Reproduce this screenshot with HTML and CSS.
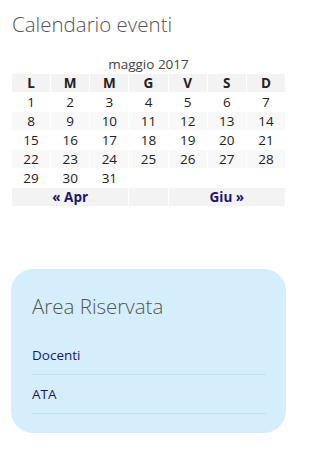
FILE: index.html
```html
<!DOCTYPE html>
<html lang="it">
<head>
    <meta charset="UTF-8">
    <meta name="viewport" content="width=device-width, initial-scale=1.0">
    <title>Calendario eventi</title>
    <link rel="stylesheet" href="styles.css">
</head>
<body>
    <div class="widget">
        <h2 class="widget-title">Calendario eventi</h2>
        <table class="calendar">
            <caption>maggio 2017</caption>
            <thead>
                <tr>
                    <th>L</th><th>M</th><th>M</th><th>G</th><th>V</th><th>S</th><th>D</th>
                </tr>
            </thead>
            <tbody>
                <tr><td>1</td><td>2</td><td>3</td><td>4</td><td>5</td><td>6</td><td>7</td></tr>
                <tr class="alt"><td>8</td><td>9</td><td>10</td><td>11</td><td>12</td><td>13</td><td>14</td></tr>
                <tr><td>15</td><td>16</td><td>17</td><td>18</td><td>19</td><td>20</td><td>21</td></tr>
                <tr class="alt"><td>22</td><td>23</td><td>24</td><td>25</td><td>26</td><td>27</td><td>28</td></tr>
                <tr><td>29</td><td>30</td><td>31</td><td class="pad" colspan="4"></td></tr>
            </tbody>
            <tfoot>
                <tr>
                    <td colspan="3"><a href="#">&laquo; Apr</a></td>
                    <td></td>
                    <td colspan="3"><a href="#">Giu &raquo;</a></td>
                </tr>
            </tfoot>
        </table>
    </div>

    <div class="widget reserved">
        <h2 class="widget-title">Area Riservata</h2>
        <ul class="links">
            <li><a href="#">Docenti</a></li>
            <li><a href="#">ATA</a></li>
        </ul>
    </div>
</body>
</html>
```

FILE: styles.css
```css
body {
    font-family: "Open Sans", "Noto Sans", sans-serif;
    margin: 0;
    padding: 0 11px;
    color: #222;
    background: #fff;
}
.widget {
    width: 275px;
}
.widget-title {
    font-weight: 300;
    font-size: 20.5px;
    color: #555;
    margin: 10px 0 0 1px;
    line-height: 28px;
}
.calendar {
    width: 275px;
    border-collapse: separate;
    border-spacing: 1px;
    margin-top: 16px;
    font-size: 13.5px;
    table-layout: fixed;
}
.calendar caption {
    text-align: center;
    color: #444;
    line-height: 18px;
    padding-top: 1px;
}
.calendar th {
    background: #f3f3f3;
    font-weight: bold;
    height: 18px;
    padding: 0;
    line-height: 18px;
}
.calendar td {
    text-align: center;
    height: 18px;
    padding: 0;
    line-height: 18px;
}
.calendar tr.alt td {
    background: #f8f8f8;
}
.calendar tfoot td {
    background: #f3f3f3;
    font-weight: bold;
}
.calendar a {
    color: #1d1470;
    text-decoration: none;
}
.reserved {
    background: #d4eefc;
    border-radius: 22px;
    margin-top: 62px;
    padding: 22px 20px 19px 21px;
    box-sizing: border-box;
}
.reserved .widget-title {
    margin: 0;
    line-height: 30px;
}
.links {
    list-style: none;
    margin: 15px 0 0;
    padding: 0;
    font-size: 13.5px;
}
.links li {
    border-bottom: 1px solid #c4e0ee;
    line-height: 38px;
}
.links a {
    color: #1d1470;
    text-decoration: none;
}
```
